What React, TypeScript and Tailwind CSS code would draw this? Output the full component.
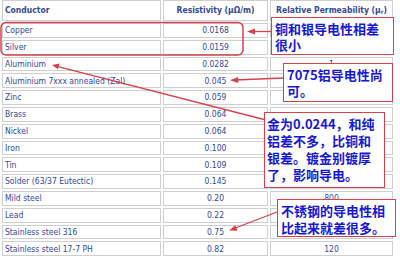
import React from 'react';

// 导体电阻率对照表（带标注）
const ROWS: [string, string, string][] = [
  ['Copper', '0.0168', ''],
  ['Silver', '0.0159', ''],
  ['Aluminium', '0.0282', '1'],
  ['Aluminium 7xxx annealed (Zal)', '0.045', ''],
  ['Zinc', '0.059', ''],
  ['Brass', '0.064', ''],
  ['Nickel', '0.064', ''],
  ['Iron', '0.100', ''],
  ['Tin', '0.109', ''],
  ['Solder (63/37 Eutectic)', '0.145', ''],
  ['Mild steel', '0.20', '800'],
  ['Lead', '0.22', ''],
  ['Stainless steel 316', '0.75', ''],
  ['Stainless steel 17-7 PH', '0.82', '120'],
];

const cell = 'border border-[#cfcfcf] bg-white flex items-center leading-none';

function Note({ className, lines }: { className: string; lines: string[] }) {
  return (
    <div
      className={`absolute bg-white border border-[#d8404c] text-[13px] leading-[16px] font-bold text-[#1818d4] whitespace-nowrap ${className}`}
      style={{ fontFamily: '"Noto Sans CJK SC", sans-serif' }}
    >
      {lines.map((l, i) => (
        <div key={i}>{l}</div>
      ))}
    </div>
  );
}

export default function App() {
  return (
    <div
      className="relative w-[400px] h-[258px] overflow-hidden bg-white text-[#34489a] text-[8.5px]"
      style={{ fontFamily: '"DejaVu Sans Condensed", "DejaVu Sans", sans-serif' }}
    >
      <div className="ml-[2px] grid grid-cols-[159px_105px_123px] grid-rows-[21px_repeat(14,14.8px)] gap-[2px]">
        <div className={`${cell} pl-[2px] font-bold`}>Conductor</div>
        <div className={`${cell} justify-center font-bold`}>Resistivity (μΩ/m)</div>
        <div className={`${cell} justify-center font-bold`}>
          Relative Permeability (μ<sub className="text-[6px]">r</sub>)
        </div>
        {ROWS.map(([name, rho, mu]) => (
          <React.Fragment key={name}>
            <div className={`${cell} pl-[2px]`}>{name}</div>
            <div className={`${cell} justify-center`}>{rho}</div>
            <div className={`${cell} justify-center`}>{mu}</div>
          </React.Fragment>
        ))}
      </div>

      {/* 红框和箭头 */}
      <svg className="absolute inset-0" width="400" height="258" viewBox="0 0 400 258">
        <rect x="1" y="22.5" width="242" height="32.5" rx="5" fill="none" stroke="#d8404c" strokeWidth="1.5" />
        <g stroke="#d8404c" strokeWidth="1.3" fill="#d8404c">
          <line x1="271" y1="31.5" x2="252" y2="31.5" />
          <polygon points="247,31.5 255,28.5 255,34.5" stroke="none" />
          <line x1="283" y1="78" x2="235" y2="80" />
          <polygon points="230,80.2 238,76.9 238.3,82.9" stroke="none" />
          <line x1="264" y1="119.5" x2="57" y2="66.3" />
          <polygon points="52,65 59.5,63.4 58,69.3" stroke="none" />
          <line x1="277" y1="212" x2="234" y2="228.5" />
          <polygon points="229,230.5 235.3,225.2 237.5,230.8" stroke="none" />
        </g>
      </svg>

      <Note className="left-[271px] top-[17px] w-[123px] h-[38px] pl-[3px] pt-[3px]" lines={['铜和银导电性相差', '很小']} />
      <Note className="left-[283px] top-[63px] w-[110px] h-[39px] pl-[3px] pt-[3px]" lines={['7075铝导电性尚', '可。']} />
      <Note
        className="left-[264px] top-[112px] w-[121px] h-[76px] pl-[2px] pt-[2px] leading-[17px]"
        lines={['金为0.0244，和纯', '铝差不多，比铜和', '银差。镀金别镀厚', '了，影响导电。']}
      />
      <Note className="left-[277px] top-[199px] w-[119px] h-[38px] pl-[3px] pt-[2px] leading-[17px]" lines={['不锈钢的导电性相', '比起来就差很多。']} />
    </div>
  );
}
